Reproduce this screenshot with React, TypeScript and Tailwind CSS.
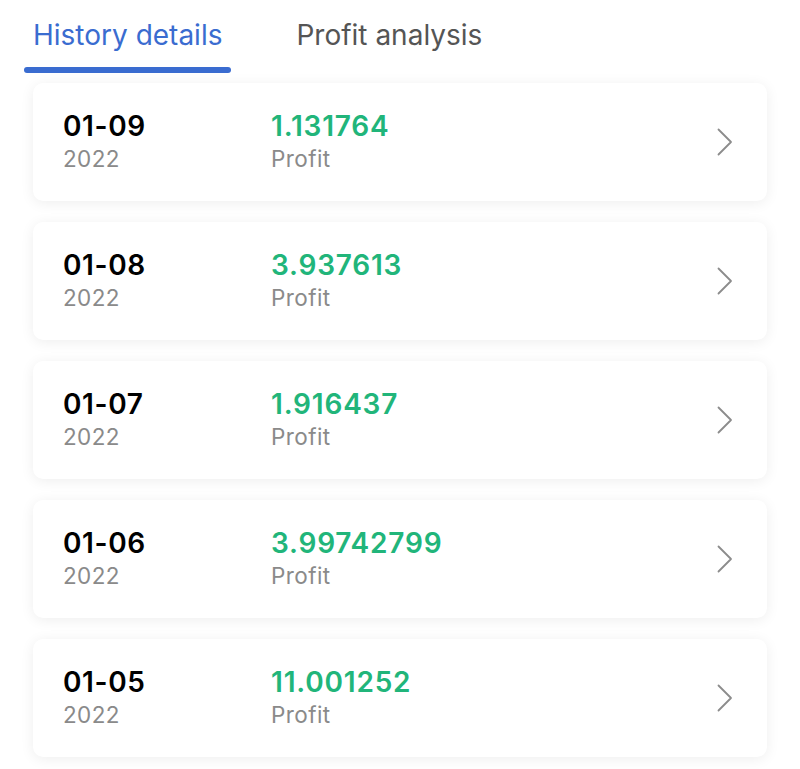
const rows = [
  { date: "01-09", year: "2022", value: "1.131764" },
  { date: "01-08", year: "2022", value: "3.937613" },
  { date: "01-07", year: "2022", value: "1.916437" },
  { date: "01-06", year: "2022", value: "3.99742799" },
  { date: "01-05", year: "2022", value: "11.001252" },
];

function Chevron() {
  return (
    <svg width="16" height="28" viewBox="0 0 16 28" fill="none" aria-hidden>
      <polyline points="1.5,1.5 14,14 1.5,26.5" stroke="#8c8c8c" strokeWidth="1.8" strokeLinecap="round" strokeLinejoin="round" />
    </svg>
  );
}

export default function App() {
  return (
    <div className="h-[769px] w-[800px] overflow-hidden bg-white font-['Inter','Noto_Sans',sans-serif]">
      <div className="flex h-[83px] items-start gap-[64px] pl-[23px]">
        <div className="flex flex-col items-center">
          <span className="mt-[17px] px-[10px] text-[28px] leading-[36px] text-[#3a6cd0]">History details</span>
          <span className="mt-[14px] h-[6px] w-[207px] rounded-full bg-[#3a6cd0]" />
        </div>
        <span className="mt-[17px] text-[28px] leading-[36px] text-[#555555]">Profit analysis</span>
      </div>

      <div className="flex flex-col gap-[21px] px-[33px]">
        {rows.map((row) => (
          <div
            key={row.date}
            className="flex h-[118px] items-center rounded-[10px] bg-white pl-[30px] pr-[34px] shadow-[0_2px_14px_rgba(0,0,0,0.07)]"
          >
            <div className="flex w-[208px] flex-col">
              <span className="text-[28px] font-semibold leading-[34px] tracking-[0.6px] text-black">{row.date}</span>
              <span className="text-[22.5px] leading-[32px] tracking-[0.4px] text-[#8a8a8a]">{row.year}</span>
            </div>
            <div className="flex flex-1 flex-col">
              <span className="text-[28px] font-semibold leading-[34px] tracking-[0.8px] text-[#21b57a]">{row.value}</span>
              <span className="text-[22.5px] leading-[32px] tracking-[0.4px] text-[#8a8a8a]">Profit</span>
            </div>
            <Chevron />
          </div>
        ))}
      </div>
    </div>
  );
}
